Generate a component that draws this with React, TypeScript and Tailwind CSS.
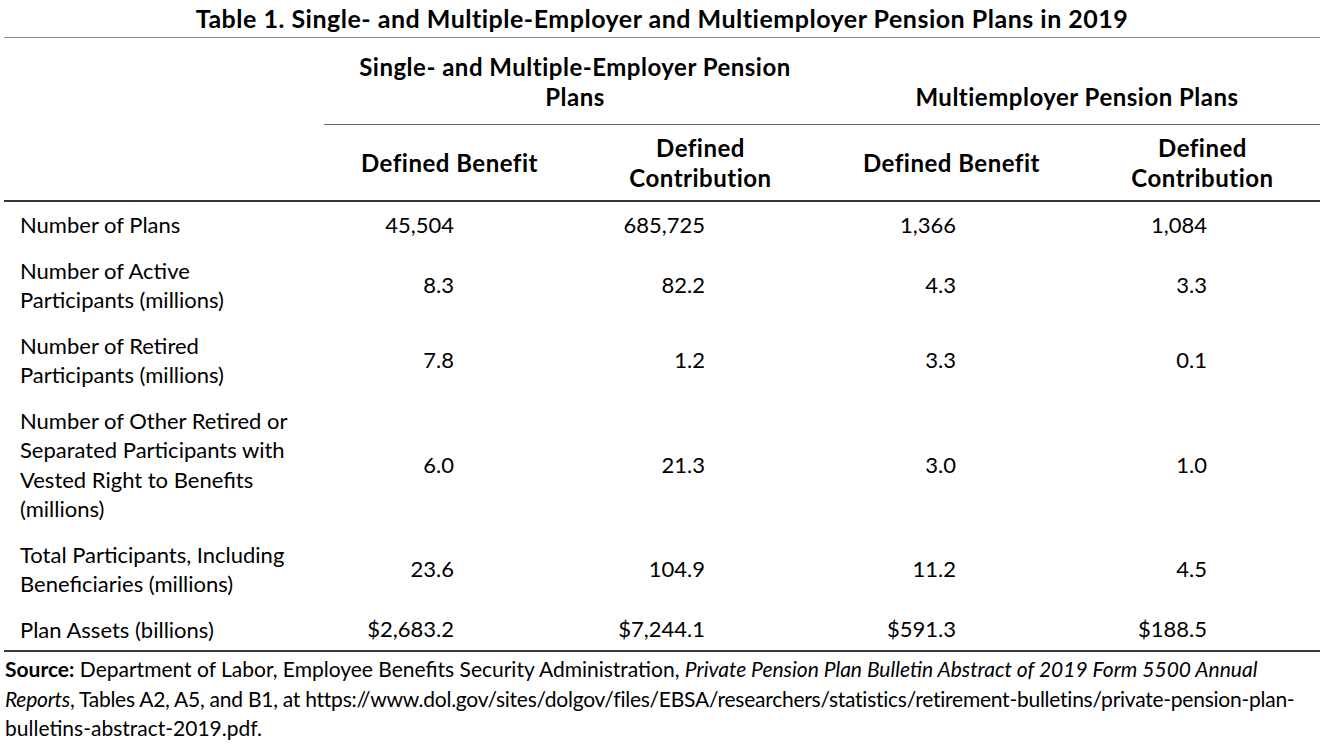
const rows: { label: string[]; values: string[] }[] = [
  { label: ['Number of Plans'], values: ['45,504', '685,725', '1,366', '1,084'] },
  { label: ['Number of Active', 'Participants (millions)'], values: ['8.3', '82.2', '4.3', '3.3'] },
  { label: ['Number of Retired', 'Participants (millions)'], values: ['7.8', '1.2', '3.3', '0.1'] },
  {
    label: ['Number of Other Retired or', 'Separated Participants with', 'Vested Right to Benefits', '(millions)'],
    values: ['6.0', '21.3', '3.0', '1.0'],
  },
  {
    label: ['Total Participants, Including', 'Beneficiaries (millions)'],
    values: ['23.6', '104.9', '11.2', '4.5'],
  },
  { label: ['Plan Assets (billions)'], values: ['$2,683.2', '$7,244.1', '$591.3', '$188.5'] },
];

function Lines({ parts }: { parts: string[] }) {
  return (
    <div>
      {parts.map((p, i) => (
        <span key={i} className="block">
          {p}
        </span>
      ))}
    </div>
  );
}

export default function App() {
  return (
    <div
      className="w-[1324px] h-[744px] overflow-hidden bg-white text-black"
      style={{ fontFamily: 'Lato, "Liberation Sans", sans-serif' }}
    >
      <h1 className="h-[37px] pt-[4px] text-center text-[25px] font-bold leading-[29px] tracking-[0.5px]">
        Table 1. Single- and Multiple-Employer and Multiemployer Pension Plans in 2019
      </h1>
      <div className="ml-[4px] w-[1316px] border-t border-[#8a8a8a]" />

      <div className="ml-[4px] grid grid-cols-[320px_251px_251px_251px_251px] text-[22px] leading-[29.5px]">
        {/* group headers */}
        <div />
        <div className="col-span-2 flex items-end justify-center pt-[14px] pb-[13px] text-center text-[24px] font-bold tracking-[0.5px]">
          <Lines parts={['Single- and Multiple-Employer Pension', 'Plans']} />
        </div>
        <div className="col-span-2 flex items-end justify-center pb-[13px] text-center text-[24px] font-bold tracking-[0.5px]">
          Multiemployer Pension Plans
        </div>

        <div />
        <div className="col-span-4 mr-[8px] border-t border-[#6a6a6a]" />

        {/* column headers */}
        <div />
        <div className="flex items-center justify-center py-[8px] text-center text-[24px] font-bold tracking-[0.5px]">
          Defined Benefit
        </div>
        <div className="flex items-center justify-center py-[8px] text-center text-[24px] font-bold tracking-[0.5px]">
          <Lines parts={['Defined', 'Contribution']} />
        </div>
        <div className="flex items-center justify-center py-[8px] text-center text-[24px] font-bold tracking-[0.5px]">
          Defined Benefit
        </div>
        <div className="flex items-center justify-center py-[8px] text-center text-[24px] font-bold tracking-[0.5px]">
          <Lines parts={['Defined', 'Contribution']} />
        </div>

        <div className="col-span-5 w-[1316px] border-t-2 border-[#2f3a2f]" />

        {/* body */}
        {rows.map((r, i) => (
          <div key={i} className="contents">
            <div className={`pl-[16px] pt-[8px] ${i === rows.length - 1 ? 'pb-[6px]' : 'pb-[8px]'}`}>
              <Lines parts={r.label} />
            </div>
            {r.values.map((v, j) => (
              <div key={j} className="flex items-center justify-end pr-[121px]">
                {v}
              </div>
            ))}
          </div>
        ))}

        <div className="col-span-5 w-[1316px] border-t-2 border-[#3a3a3a]" />
      </div>

      <div className="whitespace-nowrap pl-[5px] pt-[2px] text-[21px] leading-[29.5px]">
        <div>
          <b>Source:</b> Department of Labor, Employee Benefits Security Administration,{' '}
          <i>Private Pension Plan Bulletin Abstract of 2019 Form 5500 Annual</i>
        </div>
        <div className="tracking-[-0.25px]">
          <i>Reports</i>, Tables A2, A5, and B1, at
          https://www.dol.gov/sites/dolgov/files/EBSA/researchers/statistics/retirement-bulletins/private-pension-plan-
        </div>
        <div>bulletins-abstract-2019.pdf.</div>
      </div>
    </div>
  );
}
